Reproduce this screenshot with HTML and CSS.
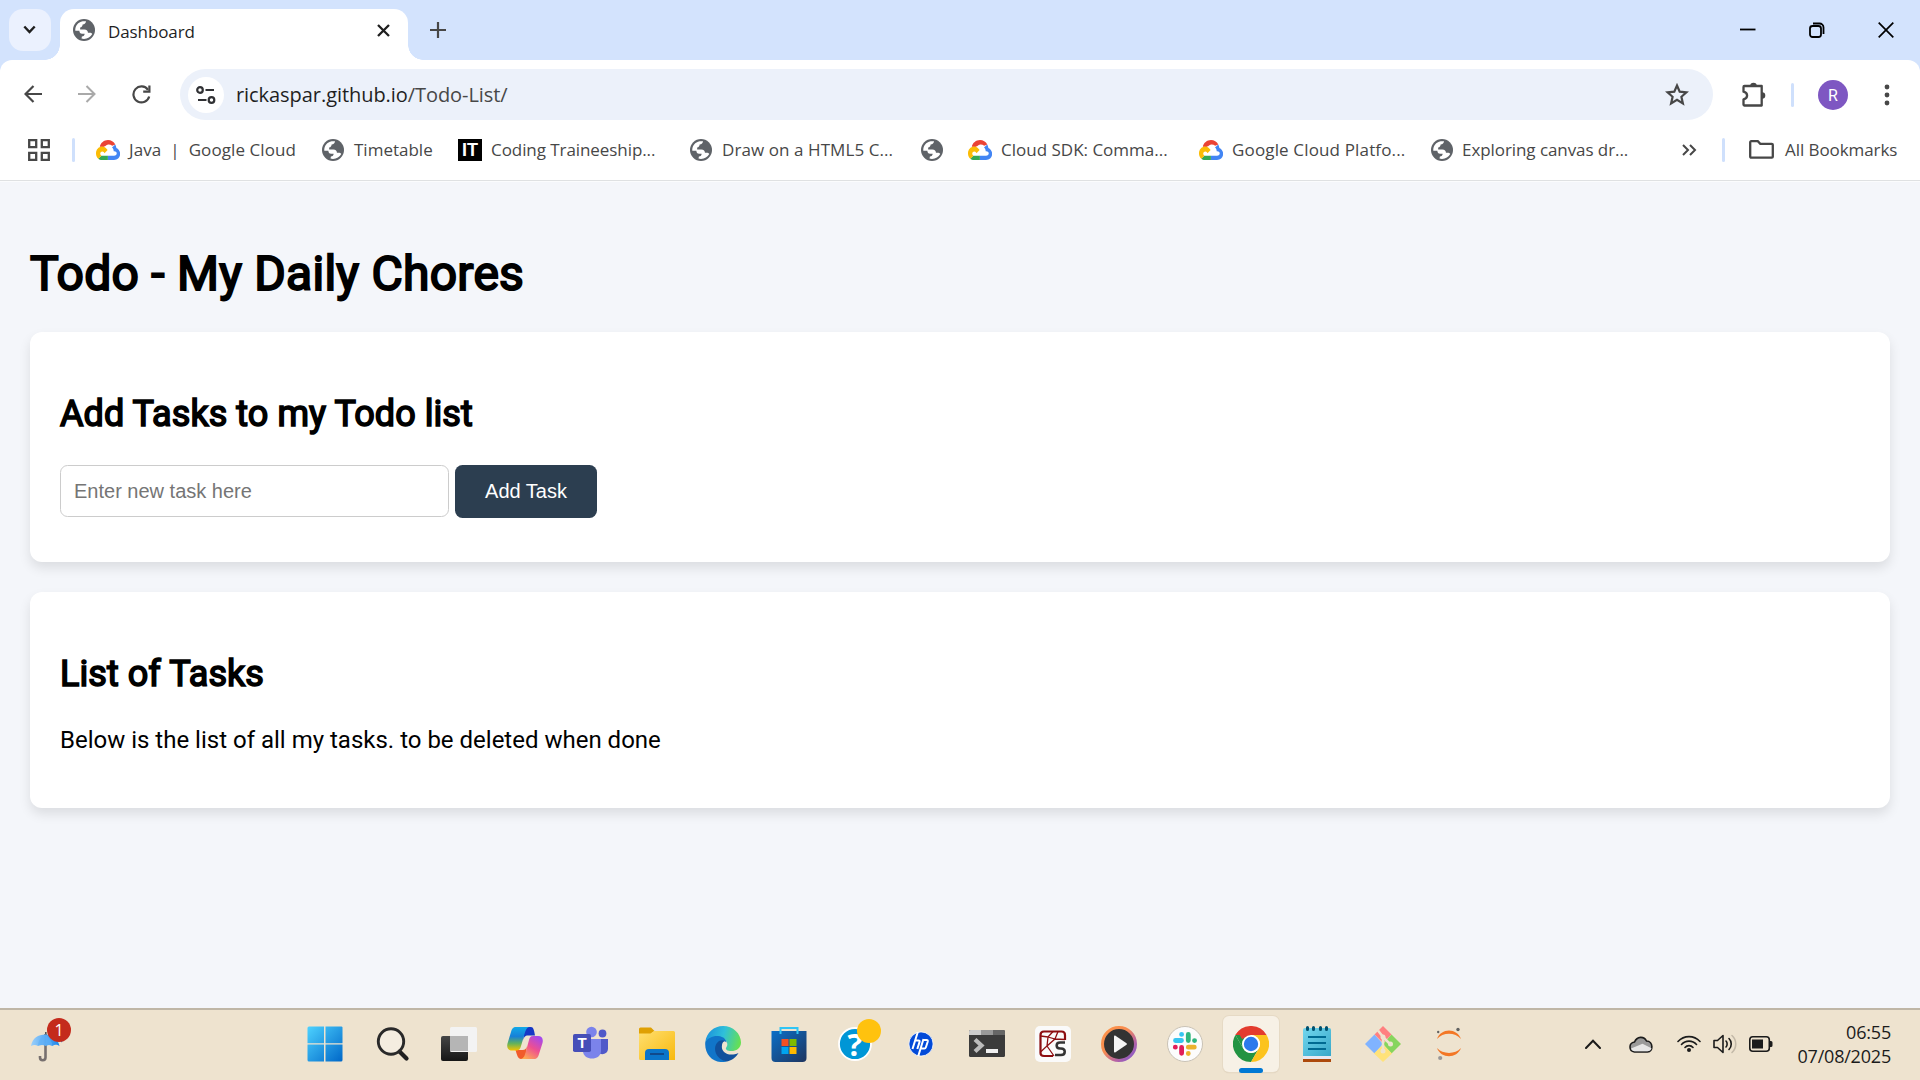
FILE: index.html
```html
<!DOCTYPE html>
<html lang="en">
<head>
<meta charset="utf-8">
<title>Dashboard</title>
<link rel="stylesheet" href="styles.css">
</head>
<body>
<svg class="defs" width="0" height="0">
  <defs>
    <linearGradient id="win" x1="0" y1="0" x2="1" y2="1"><stop offset="0" stop-color="#4dd2ff"/><stop offset="1" stop-color="#0067c8"/></linearGradient>
    <linearGradient id="cpA" x1="0" y1="0" x2="0" y2="1"><stop offset="0" stop-color="#12a9e8"/><stop offset=".4" stop-color="#1680d8"/><stop offset=".7" stop-color="#63b25c"/><stop offset="1" stop-color="#f5c400"/></linearGradient>
    <linearGradient id="cpB" x1=".8" y1="0" x2=".2" y2="1"><stop offset="0" stop-color="#a348f0"/><stop offset=".5" stop-color="#ee5090"/><stop offset="1" stop-color="#ffac52"/></linearGradient>
    <linearGradient id="fold" x1="0" y1="0" x2="1" y2="1"><stop offset="0" stop-color="#ffdf70"/><stop offset="1" stop-color="#f8b90d"/></linearGradient>
    <linearGradient id="blue" x1="0" y1="0" x2="1" y2="1"><stop offset="0" stop-color="#0a6fc8"/><stop offset="1" stop-color="#1f355f"/></linearGradient>
    <linearGradient id="edge" x1="0" y1=".3" x2="1" y2=".5"><stop offset="0" stop-color="#1b91dc"/><stop offset=".5" stop-color="#2fc0da"/><stop offset="1" stop-color="#66e052"/></linearGradient>
    <linearGradient id="dark" x1="0" y1="0" x2="0" y2="1"><stop offset="0" stop-color="#454545"/><stop offset="1" stop-color="#161616"/></linearGradient>
    <linearGradient id="ring" x1="0" y1="0" x2="1" y2="1"><stop offset="0" stop-color="#ff9447"/><stop offset=".4" stop-color="#f78b50"/><stop offset=".7" stop-color="#b763a4"/><stop offset="1" stop-color="#7958d4"/></linearGradient>
    <linearGradient id="note" x1="0" y1="0" x2="1" y2="1"><stop offset="0" stop-color="#72d6ee"/><stop offset="1" stop-color="#38a8c9"/></linearGradient>
    <linearGradient id="umb" x1="0" y1="0" x2="1" y2="0"><stop offset="0" stop-color="#9bd0fb"/><stop offset="1" stop-color="#1b87ec"/></linearGradient>
    <symbol id="globe" viewBox="0 0 24 24">
      <circle cx="12" cy="12" r="12" fill="#5f6368"/>
      <path d="M2.5 12.7C2.2 7.6 5.6 3.4 10.5 2.5h3.7c-.2 2.2-1.5 3.2-3.7 3.5-.2 2-1 3-2.7 3.4v2.1h4.5c2.8 0 4 1.4 4 3.6h1.7c1.6 0 2.5.5 3 1.3-1.8 3.2-5.100 5.200-9 5.300-1.100 0-2-.2-2.700-.5l.4-2.200c1.900-.2 3-1.200 3-3h-2.800c-1.900 0-2.800-1.100-3-3.300z" fill="#fff"/>
    </symbol>
    <symbol id="gcloud" viewBox="0 0 24 20">
      <path d="M16.200 5.800 19.300 4.500C17.800 1.800 15.100.1 12 .1 8 .1 4.700 2.900 3.800 6.700l3.400.3L9.500 6c1.900-2.100 4.500-2 6.700-.2z" fill="#ea4335"/>
      <path d="M19.300 4.400 16 7.500c1.300 1.100 1.700 2.300 1.700 3.800 4.300-.4 3.700 4.500.3 4.500h-6.200V20H18c7.600-.3 7.800-9.700 2.400-12.100-.2-1.400-.5-2.400-1.100-3.500z" fill="#4285f4"/>
      <path d="M11.900 15.800V20H6c-1.600 0-2.800-.5-3.800-1.300l3.100-2.900z" fill="#34a853"/>
      <path d="M6 6.400C-.2 6.800-1.900 15 2.300 18.700l3.100-3c-2-1.300-1.200-4.200.9-4.200 1.300 0 1.600.8 2.200 1.700l3.100-3.100C10.300 7.800 8.300 6.300 6 6.400z" fill="#fbbc05"/>
    </symbol>
  </defs>
</svg>

<header class="tabstrip">
  <div class="tabsearch"><svg width="13" height="9" viewBox="0 0 13 9"><path d="M1.300 1.500 6.500 7l5.200-5.500" fill="none" stroke="#1f1f1f" stroke-width="2.400"/></svg></div>
  <div class="tab">
    <svg class="favicon" width="22" height="22"><use href="#globe"/></svg>
    <span class="tab-title">Dashboard</span>
    <svg width="13" height="13" viewBox="0 0 13 13"><path d="M1 1l11 11M12 1 1 12" stroke="#1f1f1f" stroke-width="2.300"/></svg>
  </div>
  <svg class="newtab" width="16" height="16" viewBox="0 0 16 16"><path d="M8 0v16M0 8h16" stroke="#474747" stroke-width="2.200"/></svg>
  <div class="window-controls">
    <svg width="16" height="16" viewBox="0 0 16 16"><path d="M0 7.500h15.500" stroke="#000" stroke-width="1.800"/></svg>
    <svg width="16" height="16" viewBox="0 0 16 16"><rect x="1" y="4" width="11" height="11" rx="2.500" fill="none" stroke="#000" stroke-width="1.800"/><path d="M4 1.500h6.500a4 4 0 0 1 4 4V12" fill="none" stroke="#000" stroke-width="1.800"/></svg>
    <svg width="16" height="16" viewBox="0 0 16 16"><path d="M.7.700 15.300 15.300M15.300.700.700 15.300" stroke="#000" stroke-width="1.700"/></svg>
  </div>
</header>

<nav class="toolbar">
  <div class="nav-buttons">
    <svg width="18" height="18" viewBox="0 0 18 18"><path d="M18 9H2M9.500 1 1.500 9l8 8" fill="none" stroke="#474747" stroke-width="2.200"/></svg>
    <svg width="18" height="18" viewBox="0 0 18 18"><path d="M0 9h16M8.500 1l8 8-8 8" fill="none" stroke="#a9a9a9" stroke-width="2"/></svg>
    <svg width="19" height="19" viewBox="0 0 19 19"><path d="M17.200 11.500A8 8 0 1 1 16 4.800" fill="none" stroke="#474747" stroke-width="2.200"/><path d="M18.500.5v7.300h-7.300V5.600h5.100V.5z" fill="#474747"/></svg>
  </div>
  <div class="omnibox">
    <span class="site-info"><svg width="20" height="18" viewBox="0 0 20 18"><g fill="none" stroke="#303134" stroke-width="2.200"><circle cx="4" cy="4" r="2.800"/><path d="M9.500 4H18M2 14h8.500"/><circle cx="15.500" cy="14" r="2.800"/></g></svg></span>
    <span class="url">rickaspar.github.io<span class="path">/Todo-List/</span></span>
    <svg width="24" height="23" viewBox="0 0 24 23"><path d="m12 2.500 2.700 6.200 6.800.6-5.100 4.500 1.500 6.600L12 16.900l-5.900 3.500 1.500-6.600-5.100-4.500 6.800-.6z" fill="none" stroke="#474747" stroke-width="2.200"/></svg>
  </div>
  <svg class="puzzle" width="26" height="26" viewBox="0 0 26 26"><path d="M3.500 4h17.200v19.500H3.500a1 1 0 0 1-1-1v-5.200c4.800-1.200 4.800-6.400 0-7.600V5a1 1 0 0 1 1-1z" fill="none" stroke="#474747" stroke-width="2.300" stroke-linejoin="round"/><path d="M9.200 4a3.300 3.300 0 0 1 6.600 0zM21 10.200a3.300 3.300 0 0 1 0 6.600z" fill="#474747"/></svg>
  <span class="divider"></span>
  <span class="avatar">R</span>
  <svg class="kebab" width="6" height="22" viewBox="0 0 6 22"><g fill="#474747"><circle cx="3" cy="3" r="2.400"/><circle cx="3" cy="11" r="2.400"/><circle cx="3" cy="19" r="2.400"/></g></svg>
</nav>

<nav class="bookmarks">
  <svg width="22" height="22" viewBox="0 0 22 22"><g fill="none" stroke="#474747" stroke-width="2.300"><path d="M1.200 1.200h7v7h-7zM13.800 1.200h7v7h-7zM1.200 13.800h7v7h-7zM13.800 13.800h7v7h-7z"/></g></svg>
  <span class="divider"></span>
  <a class="bookmark b-java"><svg width="24" height="20"><use href="#gcloud"/></svg><span>Java&nbsp; |&nbsp; Google Cloud</span></a>
  <a class="bookmark b-time"><svg width="22" height="22"><use href="#globe"/></svg><span>Timetable</span></a>
  <a class="bookmark b-code"><i class="it">IT</i><span>Coding Traineeship...</span></a>
  <a class="bookmark b-draw"><svg width="22" height="22"><use href="#globe"/></svg><span>Draw on a HTML5 C...</span></a>
  <a class="bookmark b-blank"><svg width="22" height="22"><use href="#globe"/></svg></a>
  <a class="bookmark b-sdk"><svg width="24" height="20"><use href="#gcloud"/></svg><span>Cloud SDK: Comma...</span></a>
  <a class="bookmark b-plat"><svg width="24" height="20"><use href="#gcloud"/></svg><span>Google Cloud Platfo...</span></a>
  <a class="bookmark b-canvas"><svg width="22" height="22"><use href="#globe"/></svg><span>Exploring canvas dr...</span></a>
  <svg width="15" height="12" viewBox="0 0 15 12"><path d="m1 1 5 5-5 5M8 1l5 5-5 5" fill="none" stroke="#474747" stroke-width="2"/></svg>
  <span class="divider"></span>
  <a class="bookmark b-all"><svg width="25" height="19" viewBox="0 0 25 19"><path d="M2.200 1.200h6.600l2.500 2.600h11.500a1 1 0 0 1 1 1v11.900a1 1 0 0 1-1 1H2.200a1 1 0 0 1-1-1V2.200a1 1 0 0 1 1-1z" fill="none" stroke="#474747" stroke-width="2.300"/></svg><span>All Bookmarks</span></a>
</nav>

<main class="page">
  <h1>Todo - My Daily Chores</h1>
  <section class="card">
    <h2>Add Tasks to my Todo list</h2>
    <form class="task-form">
      <input type="text" placeholder="Enter new task here">
      <button type="button">Add Task</button>
    </form>
  </section>
  <section class="card list">
    <h2>List of Tasks</h2>
    <p>Below is the list of all my tasks. to be deleted when done</p>
  </section>
</main>

<footer class="taskbar">
  <div class="weather">
    <svg width="34" height="30" viewBox="0 0 34 30"><path d="M14.500 2v23.500c0 3.700-5.500 3.700-5.500 0V24" fill="none" stroke="#77706f" stroke-width="2.600"/><path d="M14 0h1.600v4H14z" fill="#555"/><path d="M0 14C1.500 6 7 2.500 14.500 2.500S27 7 28.500 14c-3-2-5-1.500-7 0-2.500-1.500-4.500-1.500-7 0-2-1.500-5-1.500-7.500 0-2-1.300-4.500-1.500-7 0z" fill="url(#umb)"/><path d="M7 13.500C7.500 8 10 4.500 14.500 2.500c-3 4-3.500 7-3.500 10.500zM14.500 14c.5-5 0-8 0-11.500 4 3 6.500 7 7 11.500-2.500-1.500-4.500-1.500-7 0z" fill="#5fb1f8" opacity=".65"/><path d="m29 8 3 .5-1.500 2z" fill="#1b87ec"/></svg>
    <span class="badge">1</span>
  </div>
  <div class="apps">
    <span class="start"><svg width="36" height="36" viewBox="0 0 36 36"><path d="M2 .5h15v16.700H.5V2A1.500 1.500 0 0 1 2 .500zM18.500.500h15.700A1.200 1.200 0 0 1 35.500 2v15.200h-17zM.500 18.500H17v17H2A1.500 1.500 0 0 1 .500 34zM18.500 18.500h17V34a1.500 1.500 0 0 1-1.500 1.500H18.500z" fill="url(#win)"/></svg></span>
    <span><svg width="36" height="36" viewBox="0 0 36 36"><path d="M24.500 25.500 31.500 32.500" stroke="#202020" stroke-width="4.200" stroke-linecap="round"/><circle cx="16" cy="15.500" r="12.700" fill="#fff" fill-opacity=".35" stroke="#292929" stroke-width="2.900"/></svg></span>
    <span><svg width="36" height="36" viewBox="0 0 36 36"><rect y="10" width="27" height="25" rx="2" fill="url(#dark)"/><rect x="9" y="1" width="27" height="25" rx="1.500" fill="#f3f3f3"/><path d="M9 10h18v15H9z" fill="#b5b5b5"/></svg></span>
    <span><svg width="36" height="36" viewBox="0 0 36 36"><path d="M18 1h6c2.500 0 3 3 4 8.500h-7c-3 0-4 1.500-5 5z" fill="#1637c5"/><path d="M18 33h-4c-3 0-4-4-5.500-9h7c3 0 4-2 4.500-4z" fill="#f15b2b"/><path d="M9 1h13c-3 1-4 5-5 9l-3 10c-1 3.500-2 4.500-5 4.500H5c-4 0-5.500-3-4.500-7L4 6c1-3.500 2-5 5-5z" fill="url(#cpA)"/><path d="M27 33H14c3-1 4-4 5-8l3-11c1-3.500 2-4 5-4h4c4 0 5.500 3 4.500 7L32 28c-1 3.500-2 5-5 5z" fill="url(#cpB)"/></svg></span>
    <span><svg width="36" height="36" viewBox="0 0 36 36"><circle cx="29.500" cy="7.500" r="3.900" fill="#5059c9"/><circle cx="18.500" cy="6" r="5.300" fill="#7b83eb"/><path d="M25 13h10v9.500c0 6-7 7-10 4z" fill="#5059c9"/><path d="M10 13h18v12c0 10-18 10-18 0z" fill="#7b83eb"/><rect y="8" width="18" height="18" rx="1.800" fill="#464eb8"/></svg><b class="teams-t">T</b></span>
    <span><svg width="36" height="36" viewBox="0 0 36 36"><path d="M0 3a1.500 1.500 0 0 1 1.500-1.500H12L15.500 5l-4 3H0z" fill="#dfa002"/><path d="M0 7.500h11.500L15 5h19.500a1.500 1.500 0 0 1 1.500 1.500V34H1.500A1.500 1.500 0 0 1 0 32.500z" fill="url(#fold)"/><path d="M6 34v-7a4 4 0 0 1 4-4h16a4 4 0 0 1 4 4v7z" fill="#0b75c9"/><path d="M11 28h14" stroke="#114a8b" stroke-width="2"/></svg></span>
    <span><svg width="36" height="36" viewBox="0 0 36 36"><path d="M.3 16C1.500 6.500 9 0 18 0c10 0 18 7.500 18 16.500 0 6-5 8.500-9.500 8.500-4 0-7-1.500-5-4 2.500-3-.5-10-8-10C7.500 11 3 13 .3 16z" fill="url(#edge)"/><path d="M.3 16C3 12 8 9.500 13 10c6 .5 8.500 4 8.500 6.500-3-3.500-10 .5-9.500 7 .5 6 5 10.500 10 12C9.500 38.500-1 29.500.300 16z" fill="#1175c9"/><path d="M14 15c-8 6-3 19 8 20.500 5-1 9-4.500 11.500-8.500-9 4-18 0-16.500-8 .2-2 1.500-3.500 3-4.200-2-.8-4-.8-6 .2z" fill="#10509c"/></svg></span>
    <span><svg width="36" height="36" viewBox="0 0 36 36"><path d="M.500 5h35v27a4 4 0 0 1-4 4h-27a4 4 0 0 1-4-4z" fill="url(#blue)"/><path d="M9.500 8V2h17v6" fill="none" stroke="#30c5f5" stroke-width="2"/><path d="M10.500 13h7v7h-7z" fill="#f25022"/><path d="M18.500 13h7v7h-7z" fill="#7fba00"/><path d="M10.500 21h7v7h-7z" fill="#00a4ef"/><path d="M18.500 21h7v7h-7z" fill="#ffb900"/></svg></span>
    <span><svg width="36" height="36" viewBox="0 0 36 36"><circle cx="18" cy="18" r="16" fill="#0096d6" stroke="#fff" stroke-width="1.800"/></svg><b class="help-q">?</b><i class="dot"></i></span>
    <span><svg width="36" height="36" viewBox="0 0 36 36"><circle cx="18" cy="18" r="12.100" fill="#024ad8" stroke="#fff" stroke-width=".8"/><g fill="none" stroke="#fff" stroke-width="2"><path d="m14.800 6-5.300 17M12.200 14.500h3.300q1.500 0 1 1.600L14.300 23M20.500 13l-5.200 17M20 14h3.500q1.700 0 1.200 1.700l-1.800 5.600q-.4 1.200-1.600 1.200H17.500"/></g></svg></span>
    <span><svg width="36" height="36" viewBox="0 0 36 36"><rect y="4" width="36" height="27" rx="1.500" fill="#3b3b3b"/><path d="M1.500 4H12v5H0V5.500A1.500 1.500 0 0 1 1.500 4z" fill="#ccc"/><path d="M12 4h12v5H12z" fill="#999"/><path d="M24 4h10.500A1.500 1.500 0 0 1 36 5.500V9H24z" fill="#666"/><path d="m6 13.500 6.500 6L6 25.500" fill="none" stroke="#bbb" stroke-width="4.200"/><path d="M17 23h12v4H17z" fill="#f0f0f0"/></svg></span>
    <span><svg width="36" height="36" viewBox="0 0 36 36"><rect width="36" height="36" rx="5" fill="#fafafa"/><g fill="none" stroke="#8c0d10" stroke-width="1.300"><path d="M30 14V9q0-3.500-3.500-3.500H9Q5.500 5.500 5.500 9v18Q5.500 30 9 30h9" stroke-width="2.200"/><path d="M5.500 10 13 11l5-5.500M13 11l-1 9-6.500 6M12 20l8-7 10 .5M13 11l7 2 3-7.500M12 20l7 10"/></g><path d="M30 16.500h-5c-4.500 0-4.500 6 0 6h1c5 0 5 6.500 0 6.500h-6" fill="none" stroke="#333" stroke-width="2.500"/></svg></span>
    <span><svg width="36" height="36" viewBox="0 0 36 36"><circle cx="18" cy="18" r="16.500" fill="#333" stroke="url(#ring)" stroke-width="3"/><path d="M13 10.500c0-1 .7-1.200 1.500-.7l11 7.400q1 .8 0 1.600l-11 7.400c-.8.500-1.500.2-1.500-.700z" fill="#f5f5f5"/></svg></span>
    <span><svg width="36" height="36" viewBox="0 0 36 36"><circle cx="18" cy="18" r="17.500" fill="#fcfcfc" stroke="#c9c2b5" stroke-width="1"/><g stroke-width="4.800" stroke-linecap="round"><path d="M8.500 14.500h6M14.600 8.300v.1" stroke="#36c5f0"/><path d="M21.300 8.500v6M27.500 14.600h.1" stroke="#2eb67d"/><path d="M21.300 21.200h6M21.300 27.400v.1" stroke="#ecb22e"/><path d="M14.600 21.300v6M8.300 21.200h.1" stroke="#e01e5a"/></g></svg></span>
    <span class="active"><svg width="36" height="36" viewBox="0 0 36 36"><path d="M2.400 9A18 18 0 0 1 33.600 9H18z" fill="#e33b2e"/><path d="M2.400 9A18 18 0 0 0 18 36l7.800-13.500A9 9 0 0 1 10.200 22.500z" fill="#229342"/><path d="M33.600 9A18 18 0 0 1 18 36l7.800-13.500A9 9 0 0 0 18 9z" fill="#fcc31e"/><path d="M2.400 9 10.200 22.500 18 9z" fill="#229342"/><path d="M2.400 9 5 6l4 7 9-4z" fill="#e33b2e"/><circle cx="18" cy="18" r="9" fill="#fff"/><circle cx="18" cy="18" r="7.200" fill="#2c79ec"/></svg><i class="indicator"></i></span>
    <span><svg width="36" height="36" viewBox="0 0 36 36"><path d="M4 31h28v5H4z" fill="#ad4a0c"/><path d="M4 29h28v4H4z" fill="#e9e9f2"/><path d="M4 4a2 2 0 0 1 2-2h24a2 2 0 0 1 2 2v26H4z" fill="url(#note)"/><path d="M9 11h18M9 17h18M9 23h18" stroke="#006a92" stroke-width="1.900"/><path d="M8.500 1.500v2M14.500 1.500v2M21.500 1.500v2M27.500 1.500v2" stroke="#00506e" stroke-width="3" stroke-linecap="round"/></svg></span>
    <span><svg width="36" height="36" viewBox="0 0 36 36"><path d="m18 0 8.500 8.500L18 17l-8.500-8.500z" fill="#ff8080"/><path d="m9.500 8.500 8.500 9.500-8.500 9.500L0 18z" fill="#80b3ff"/><path d="m26.500 8.500 9.500 9.500-9.500 9.500L18 18z" fill="#87d55d"/><path d="m18 18.500 9 9L18 36l-9-8.500z" fill="#ffe27a"/><path d="M13 4.500 18 11v14M18 11l7 7" fill="none" stroke="#eee3cf" stroke-width="2.500"/><circle cx="18" cy="11" r="2.500" fill="#eee3cf"/><circle cx="18" cy="25" r="2.500" fill="#eee3cf"/><circle cx="25.500" cy="18" r="2.500" fill="#eee3cf"/></svg></span>
    <span><svg width="36" height="36" viewBox="0 0 36 36"><path d="M6 13C10 1.500 26 1.500 30 13 24 6 12 6 6 13zM6 22c4 11 20 11 24 0-6 6.500-18 6.500-24 0z" fill="#f37726"/><circle cx="27" cy="3.500" r="1.700" fill="#616262"/><circle cx="7.200" cy="6" r="1.200" fill="#616262"/><circle cx="9.200" cy="32" r="2.100" fill="#989798"/></svg></span>
  </div>
  <div class="tray">
    <svg class="t-up" width="16" height="10" viewBox="0 0 16 10"><path d="m1 9 7-7.200L15 9" fill="none" stroke="#1b1b1b" stroke-width="2" stroke-linecap="round"/></svg>
    <svg class="t-cloud" width="24" height="17" viewBox="0 0 24 17"><path d="M5.500 6C8 0 15 0 17.500 5c7 0 7 11 1 11H5.500C-.5 15-.5 7 5.500 6z" fill="#9a9a9a" stroke="#1b1b1b" stroke-width="1.600"/><path d="m2 12.500 11.500-4.700 9 4.500c-.5 2-2 2.900-4 2.900h-13c-1.500 0-3-1-3.500-2.700z" fill="#e6e6e6"/></svg>
    <svg class="t-wifi" width="24" height="18" viewBox="0 0 24 18"><g fill="none" stroke="#1b1b1b" stroke-width="1.600" stroke-linecap="round"><path d="M1 6.500C7 0 17 0 23 6.500M4.500 9.500c4-4.500 11-4.500 15 0M8 12.500c2-2.500 6-2.500 8 0"/></g><circle cx="12" cy="15" r="2" fill="#1b1b1b"/></svg>
    <svg class="t-vol" width="24" height="20" viewBox="0 0 24 20"><g fill="none" stroke="#1b1b1b" stroke-width="1.600" stroke-linecap="round" stroke-linejoin="round"><path d="M1 6.500h3.500L10 1.500v17l-5.500-5H1zM13 7c1.500 1.500 1.500 4.500 0 6M16 4.500c3 3 3 8 0 11"/><path d="M19 1.500c5 4.500 5 12.500 0 17" stroke="#c3b9a8"/></g></svg>
    <svg width="24" height="16" viewBox="0 0 24 16"><rect x=".8" y=".8" width="19.500" height="14.400" rx="3" fill="none" stroke="#1b1b1b" stroke-width="1.600"/><path d="M3 3.500h11v9H3zM20.500 5H22a1.500 1.500 0 0 1 1.500 1.500v3A1.500 1.500 0 0 1 22 11h-1.500z" fill="#1b1b1b"/></svg>
    <div class="clock"><span>06:55</span><span>07/08/2025</span></div>
  </div>
</footer>
</body>
</html>
```
FILE: styles.css
```css
* { box-sizing: border-box; }

body {
  margin: 0;
  width: 1920px;
  height: 1080px;
  overflow: hidden;
  display: flex;
  flex-direction: column;
  background: #d3e3fd;
  font-family: "Open Sans", sans-serif;
  color: #1f1f1f;
}

svg { display: block; flex: none; }
.defs { position: absolute; }

/* Tab strip */
.tabstrip {
  height: 60px;
  display: flex;
  align-items: flex-start;
  padding: 9px 26px 0 9px;
}
.tabsearch {
  width: 42px;
  height: 42px;
  border-radius: 14px;
  background: #ebf1fe;
  display: grid;
  place-items: center;
}
.tabsearch svg { margin: -1px 1px 0 0; }
.tab {
  position: relative;
  width: 348px;
  height: 51px;
  margin-left: 9px;
  padding: 0 18px 9px 13px;
  display: flex;
  align-items: center;
  background: #fff;
  border-radius: 14px 14px 0 0;
}
.tab::before,
.tab::after {
  content: "";
  position: absolute;
  bottom: 0;
  width: 15px;
  height: 15px;
}
.tab::before { left: -15px; background: radial-gradient(circle at 0 0, transparent 14.5px, #fff 15px); }
.tab::after { right: -15px; background: radial-gradient(circle at 100% 0, transparent 14.5px, #fff 15px); }
.tab-title { margin: 2px auto 0 13px; font-size: 17px; letter-spacing: -.1px; }
.newtab { margin: 13px 0 0 22px; }
.window-controls { margin: 13px 0 0 auto; display: flex; gap: 53px; }

/* Toolbar */
.toolbar {
  height: 60px;
  display: flex;
  align-items: center;
  padding: 9px 30px 0 24px;
  background: #fff;
  border-radius: 12px 12px 0 0;
}
.nav-buttons { width: 156px; display: flex; gap: 36px; }
.omnibox {
  width: 1533px;
  height: 51px;
  display: flex;
  align-items: center;
  padding: 0 24px 0 8px;
  border-radius: 26px;
  background: #ecf1fa;
}
.site-info {
  width: 36px;
  height: 36px;
  border-radius: 50%;
  background: #fff;
  display: grid;
  place-items: center;
}
.url { margin: 0 auto 0 12px; font-size: 20px; letter-spacing: -.06px; }
.path { color: #474747; }
.puzzle { margin-left: 28px; }
.divider { width: 3px; height: 24px; border-radius: 2px; background: #cfe0fc; flex: none; }
.toolbar .divider { margin-left: 24px; }
.avatar {
  width: 30px;
  height: 30px;
  margin-left: 24px;
  border-radius: 50%;
  background: #7e57c2;
  color: #fff;
  font: 16px/31px Roboto, sans-serif;
  text-align: center;
}
.kebab { margin-left: 36px; }

/* Bookmarks bar */
.bookmarks {
  height: 61px;
  display: grid;
  grid-template-columns: 44px 24px 226px 136px 232px 231px 47px 231px 232px 251px 40px 27px 1fr;
  align-items: center;
  padding: 0 0 1px 28px;
  background: #fff;
  border-bottom: 1px solid #dfe1e2;
  font-size: 17px;
  color: #474747;
}
.bookmark { display: flex; align-items: center; gap: 9px; white-space: nowrap; }
.it {
  width: 24px;
  height: 22px;
  background: #000;
  color: #fff;
  font: bold 18px/22px "Liberation Sans", sans-serif;
  text-align: center;
}
.b-java { letter-spacing: .08px; }
.b-code, .b-canvas, .b-all { letter-spacing: -.07px; }
.b-draw { letter-spacing: .08px; }
.b-plat { letter-spacing: .15px; }
.b-time, .b-draw { gap: 10px; }
.b-all { gap: 11px; }

/* Todo page */
.page {
  flex: 1;
  padding: 0 30px;
  border-top: 1px solid #fbfcfd;
  background: #f4f6fa;
  font: 24px/1.5 Roboto, sans-serif;
  color: #000;
}
h1, h2 { margin: 0; font-weight: 400; }
h1 {
  padding-top: 56px;
  height: 150px;
  font-size: 48px;
  letter-spacing: .26px;
  -webkit-text-stroke: 2px #000;
}
h2 {
  font-size: 36px;
  line-height: 42px;
  letter-spacing: .06px;
  -webkit-text-stroke: 1.600px #000;
}
.card {
  height: 230px;
  margin-bottom: 30px;
  padding: 61px 30px 0;
  border-radius: 12px;
  background: #fff;
  box-shadow: 0 6px 12px rgba(0, 0, 0, .1);
}
.list { height: 216px; }
.task-form { display: flex; gap: 6px; margin-top: 30px; }
input, button { font: 20px "Liberation Sans", Arial, sans-serif; border-radius: 7.500px; }
input { width: 389px; height: 52px; padding: 0 13px; border: 1px solid #ccc; }
input::placeholder { color: #757575; }
button { width: 142px; height: 53px; padding: 0; border: 0; background: #2c3e50; color: #fff; }
.list p { margin: 27px 0 0; line-height: 36px; }

/* Taskbar */
.taskbar {
  height: 72px;
  display: flex;
  align-items: center;
  padding: 0 0 2px 31px;
  border-top: 2px solid #bfb6a6;
  background: #eee3cf;
}
.weather { position: relative; width: 261px; }
.weather svg { margin-top: 6px; }
.badge {
  position: absolute;
  left: 16px;
  top: -8px;
  width: 24px;
  height: 24px;
  border-radius: 50%;
  background: #c42b1c;
  color: #fff;
  font: 16px/24px "Open Sans", sans-serif;
  text-align: center;
}
.apps { width: 1293px; display: flex; }
.apps > span { position: relative; width: 66px; height: 56px; display: grid; place-items: center; }
.apps .start { margin-right: 2px; }
.apps .active::before {
  content: "";
  position: absolute;
  left: 5px;
  top: 0;
  width: 56px;
  height: 56px;
  border-radius: 6px;
  background: #f7f1e6;
  box-shadow: 0 0 0 1px #e6dac5, 0 1px 1px #cfc4b1;
}
.apps .active svg { position: relative; }
.indicator {
  position: absolute;
  left: 21px;
  bottom: -1px;
  width: 24px;
  height: 5px;
  border-radius: 3px;
  background: #0078d4;
}
.teams-t {
  position: absolute;
  left: 15px;
  top: 18px;
  width: 18px;
  color: #fff;
  font: bold 15px/18px "Liberation Sans", sans-serif;
  text-align: center;
}
.help-q {
  position: absolute;
  left: 15px;
  width: 36px;
  color: #fff;
  font: bold 31px/36px "Open Sans", sans-serif;
  text-align: center;
}
.dot { position: absolute; left: 35px; top: 3px; width: 24px; height: 24px; border-radius: 50%; background: #ffc20e; }
.tray { display: flex; align-items: center; color: #1b1b1b; }
.t-cloud { margin-left: 28px; }
.t-wifi { margin-left: 24px; }
.t-vol { margin: 0 12px; }
.clock {
  width: 118px;
  display: flex;
  flex-direction: column;
  text-align: right;
  font-size: 18px;
  line-height: 24px;
  letter-spacing: -.2px;
}
```
